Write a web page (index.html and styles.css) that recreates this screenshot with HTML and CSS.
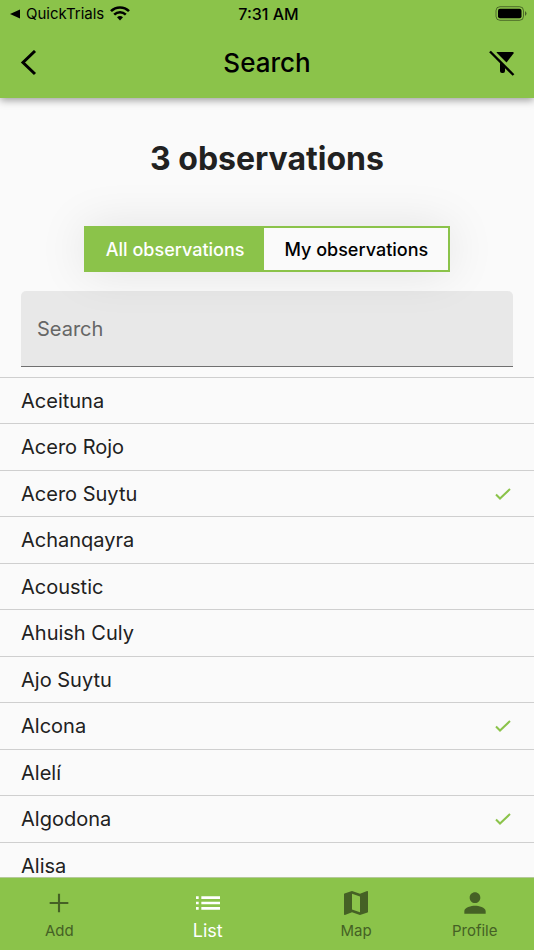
FILE: index.html
```html
<!DOCTYPE html>
<html lang="en">
<head>
  <meta charset="UTF-8">
  <meta name="viewport" content="width=device-width, initial-scale=1.0">
  <title>Search</title>
  <link rel="stylesheet" href="styles.css">
</head>
<body>
  <header class="top">
    <div class="status">
      <div class="status-left">
        <a class="back-app" href="#">
          <svg width="10" height="10" viewBox="0 0 10 10"><path d="M0 5L10 0.5V9.5Z"/></svg>
          QuickTrials
        </a>
        <svg width="20" height="15" viewBox="0 0 20 15" fill="none" stroke="currentColor" stroke-width="2.6">
          <path d="M1 5.2C6 .2 14 .2 19 5.2"/>
          <path d="M4.2 8.6C7.5 5.5 12.5 5.5 15.8 8.6"/>
          <path d="M7 11.2Q10 8.8 13 11.2L10 14.4Z" fill="currentColor" stroke="none"/>
        </svg>
      </div>
      <span class="clock">7:31 AM</span>
      <svg class="battery" width="32" height="15" viewBox="0 0 32 15">
        <rect x="1" y="0.7" width="27.5" height="13.6" rx="4" fill="none" stroke="#000" stroke-opacity="0.45"/>
        <rect x="3" y="2.7" width="23.5" height="9.6" rx="2"/>
        <path d="M30 5Q33 7.5 30 10Z" fill-opacity="0.5"/>
      </svg>
    </div>
    <div class="bar">
      <button class="icon-btn" aria-label="Back">
        <svg width="26" height="26" viewBox="0 0 26 26" fill="none" stroke="currentColor" stroke-width="3"><path d="M16 1L4 12.5L16 24"/></svg>
      </button>
      <h1>Search</h1>
      <button class="icon-btn" aria-label="Clear filter">
        <svg width="26" height="26" viewBox="0 0 26 26">
          <path d="M8 2H24.5V3.5L17.5 12.5L7.5 2.5Z"/>
          <path d="M11 12.5L16 17.5V21Q16 23 14 23H13Q11 23 11 21Z"/>
          <path d="M1 1.5L24.5 25" fill="none" stroke="currentColor" stroke-width="2.4"/>
        </svg>
      </button>
    </div>
  </header>

  <main class="content">
    <h2>3 observations</h2>
    <div class="toggle">
      <button class="selected" aria-pressed="true">All observations</button>
      <button aria-pressed="false">My observations</button>
    </div>
    <input class="search" type="text" placeholder="Search" aria-label="Search">

    <ul class="list">
      <li>Aceituna</li>
      <li>Acero Rojo</li>
      <li>Acero Suytu <svg class="check" width="16" height="12" viewBox="0 0 16 12"><path d="M1 6.5L5 10.5L15 1"/></svg></li>
      <li>Achanqayra</li>
      <li>Acoustic</li>
      <li>Ahuish Culy</li>
      <li>Ajo Suytu</li>
      <li>Alcona <svg class="check" width="16" height="12" viewBox="0 0 16 12"><path d="M1 6.5L5 10.5L15 1"/></svg></li>
      <li>Alelí</li>
      <li>Algodona <svg class="check" width="16" height="12" viewBox="0 0 16 12"><path d="M1 6.5L5 10.5L15 1"/></svg></li>
      <li>Alisa</li>
    </ul>
  </main>

  <nav class="tabs">
    <a href="#">
      <svg width="32" height="32" viewBox="0 0 24 24"><path d="M19 12.8h-6.2V19h-1.6v-6.2H5v-1.6h6.2V5h1.6v6.2H19z"/></svg>
      Add
    </a>
    <a class="active" href="#" aria-current="page">
      <svg width="32" height="32" viewBox="0 0 24 24"><path d="M3 13h2v-2H3v2zm0 4h2v-2H3v2zm0-8h2V7H3v2zm4 4h14v-2H7v2zm0 4h14v-2H7v2zM7 7v2h14V7H7z"/></svg>
      List
    </a>
    <a href="#">
      <svg width="32" height="32" viewBox="0 0 24 24"><path d="M20.5 3l-.16.03L15 5.1 9 3 3.36 4.9c-.21.07-.36.25-.36.48V20.5c0 .28.22.5.5.5l.16-.03L9 18.9l6 2.1 5.64-1.9c.21-.07.36-.25.36-.48V3.5c0-.28-.22-.5-.5-.5zM15 19l-6-2.11V5l6 2.11V19z"/></svg>
      Map
    </a>
    <a href="#">
      <svg width="32" height="32" viewBox="0 0 24 24"><path d="M12 12c2.21 0 4-1.79 4-4s-1.79-4-4-4-4 1.79-4 4 1.79 4 4 4zm0 2c-2.67 0-8 1.34-8 4v2h16v-2c0-2.66-5.33-4-8-4z"/></svg>
      Profile
    </a>
  </nav>
</body>
</html>
```
FILE: styles.css
```css
* {
  box-sizing: border-box;
}
body {
  margin: 0;
  height: 100vh;
  display: flex;
  flex-direction: column;
  font-family: Inter, "Liberation Sans", sans-serif;
  background: #fafafa;
  color: #212121;
}
button {
  font: inherit;
  border: none;
  background: none;
  padding: 0;
  cursor: pointer;
}
a {
  color: inherit;
  text-decoration: none;
}
svg {
  display: block;
  flex: none;
}

.top {
  position: relative;
  z-index: 1;
  background: #8bc34a;
  color: #000;
  box-shadow: 0 2px 8px rgba(0, 0, 0, 0.4);
}
.status {
  display: grid;
  grid-template-columns: 1fr auto 1fr;
  align-items: center;
  height: 27px;
  padding: 0 7px 0 10px;
  font-size: 15px;
}
.status-left,
.back-app {
  display: flex;
  align-items: center;
  gap: 6px;
}
.clock {
  font-size: 16px;
  font-weight: 500;
}
.battery {
  justify-self: end;
}
.bar {
  display: flex;
  align-items: center;
  justify-content: space-between;
  height: 71px;
  padding: 0 19px;
}
.bar h1 {
  margin: 0;
  font-size: 26px;
  line-height: 32px;
  font-weight: 500;
}
.icon-btn {
  width: 26px;
  color: #000;
}

.content {
  flex: 1;
  min-height: 0;
  overflow: hidden;
}
.content h2 {
  margin: 41px 0 47px;
  font-size: 32px;
  line-height: 40px;
  font-weight: 700;
  text-align: center;
}
.toggle {
  display: grid;
  grid-template-columns: auto auto;
  width: fit-content;
  height: 46px;
  margin: 0 auto;
  border: 2px solid #8bc34a;
  background: #fafafa;
  box-shadow: 0 0 48px rgba(0, 0, 0, 0.1);
}
.toggle button {
  padding: 0 20px;
  font-size: 18px;
  font-weight: 500;
  color: #000;
}
.toggle .selected {
  background: #8bc34a;
  color: #fff;
}
.search {
  display: block;
  width: calc(100% - 42px);
  height: 76px;
  margin: 19px 21px 10px;
  padding: 0 16px;
  border: none;
  border-bottom: 1px solid #707070;
  border-radius: 5px 5px 0 0;
  background: rgba(0, 0, 0, 0.07);
  font: inherit;
  font-size: 20px;
}
.search::placeholder {
  color: #666;
  opacity: 1;
}
.list {
  display: grid;
  grid-auto-rows: 46px 47px;
  margin: 0;
  padding: 0;
  list-style: none;
}
.list li {
  display: flex;
  align-items: center;
  justify-content: space-between;
  padding: 0 23px 0 21px;
  border-top: 1px solid #cfcfcf;
  font-size: 20px;
}
.check {
  fill: none;
  stroke: #8bc34a;
  stroke-width: 2;
}

.tabs {
  display: flex;
  height: 73px;
  padding-top: 9px;
  background: #8bc34a;
  border-top: 1px solid #b5c99b;
  font-size: 15px;
}
.tabs a {
  flex: 1;
  display: flex;
  flex-direction: column;
  align-items: center;
  gap: 2px;
  line-height: 20px;
  color: #456125;
}
.tabs .active {
  flex: 1.5;
  font-size: 18px;
  color: #fff;
}
.tabs svg {
  fill: currentColor;
}
```
